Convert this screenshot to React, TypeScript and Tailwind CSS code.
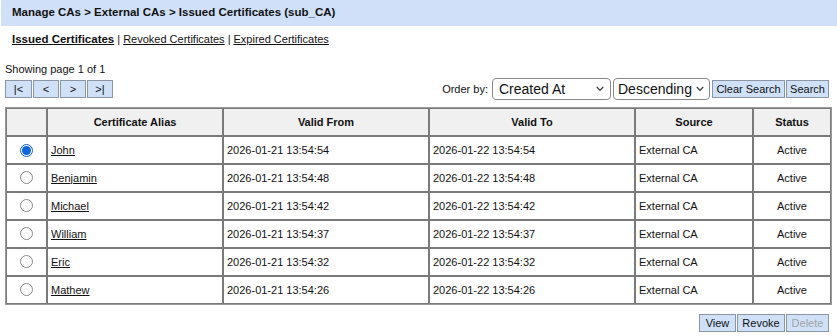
import React from "react";

const rows = [
  { name: "John", from: "2026-01-21 13:54:54", to: "2026-01-22 13:54:54" },
  { name: "Benjamin", from: "2026-01-21 13:54:48", to: "2026-01-22 13:54:48" },
  { name: "Michael", from: "2026-01-21 13:54:42", to: "2026-01-22 13:54:42" },
  { name: "William", from: "2026-01-21 13:54:37", to: "2026-01-22 13:54:37" },
  { name: "Eric", from: "2026-01-21 13:54:32", to: "2026-01-22 13:54:32" },
  { name: "Mathew", from: "2026-01-21 13:54:26", to: "2026-01-22 13:54:26" },
];

function Radio({ checked }: { checked: boolean }) {
  return checked ? (
    <span className="inline-flex w-[13px] h-[13px] rounded-full border border-[#0f5fd0] items-center justify-center bg-white">
      <span className="w-[9px] h-[9px] rounded-full bg-[#1065dc]" />
    </span>
  ) : (
    <span className="inline-block w-[13px] h-[13px] rounded-full border border-[#8a8a8a] bg-white" />
  );
}

function Chevron() {
  return (
    <svg width="8" height="6" viewBox="0 0 8 6" className="shrink-0">
      <path d="M0.8 1 L4 4.3 L7.2 1" fill="none" stroke="#333" strokeWidth="1.2" />
    </svg>
  );
}

const btnBase =
  "h-[18px] bg-[#cfe0f7] border border-[#8a96a6] text-[11px] leading-none flex items-center justify-center";
const btn = `${btnBase} text-[#111]`;

export default function App() {
  const font = { fontFamily: '"Liberation Sans", Arial, sans-serif' };
  return (
    <div className="w-[837px] h-[336px] bg-white text-[#111] text-[11px]" style={font}>
      <div className="h-[26px] ml-[1px] bg-[#cfe0f8] flex items-center pl-[11px] font-bold text-[11.5px]">
        Manage CAs &gt; External CAs &gt; Issued Certificates (sub_CA)
      </div>
      <div className="h-[28px] pl-[12px] pt-[5px] text-[11px] flex items-start">
        <span className="font-bold underline text-[11.5px]">Issued Certificates</span>
        <span className="mx-[3px]">|</span>
        <span className="underline">Revoked Certificates</span>
        <span className="mx-[3px]">|</span>
        <span className="underline">Expired Certificates</span>
      </div>
      <div className="px-[5px]">
        <div className="h-[24px] flex items-end pb-[1px]">Showing page 1 of 1</div>
        <div className="flex items-center justify-between h-[22px]">
          <div className="flex gap-[1px]">
            <div className={`${btn} w-[27px]`}>|&lt;</div>
            <div className={`${btn} w-[26px]`}>&lt;</div>
            <div className={`${btn} w-[26px]`}>&gt;</div>
            <div className={`${btn} w-[26px]`}>&gt;|</div>
          </div>
          <div className="flex items-center pr-[3px]">
            <span className="mr-[4px]">Order by:</span>
            <div className="w-[119px] h-[22px] border border-[#8a8a8a] rounded-[4px] bg-white flex items-center justify-between pl-[6px] pr-[6px] text-[14px]">
              <span>Created At</span>
              <Chevron />
            </div>
            <div className="ml-[2px] w-[97px] h-[22px] border border-[#8a8a8a] rounded-[4px] bg-white flex items-center justify-between pl-[4px] pr-[5px] text-[14px]">
              <span>Descending</span>
              <Chevron />
            </div>
            <div className={`${btn} ml-[2px] w-[73px] text-[10.5px]`}>Clear Search</div>
            <div className={`${btn} ml-[1px] w-[43px] text-[10.5px]`}>Search</div>
          </div>
        </div>
        <table
          className="mt-[7px] w-[827px] border border-[#9a9a9a] border-separate"
          style={{ borderSpacing: 0 }}
        >
          <thead>
            <tr className="bg-[#f0f0f0] h-[28px] font-bold">
              <th className="w-[41px] border border-[#7a7a7a]"></th>
              <th className="w-[176px] border border-[#7a7a7a]">Certificate Alias</th>
              <th className="w-[206px] border border-[#7a7a7a]">Valid From</th>
              <th className="w-[206px] border border-[#7a7a7a]">Valid To</th>
              <th className="w-[118px] border border-[#7a7a7a]">Source</th>
              <th className="border border-[#7a7a7a]">Status</th>
            </tr>
          </thead>
          <tbody>
            {rows.map((r, i) => (
              <tr key={r.name} className="h-[28px]">
                <td className="border border-[#7a7a7a] text-center align-middle">
                  <span className="inline-flex items-center justify-center pt-[3px]">
                    <Radio checked={i === 0} />
                  </span>
                </td>
                <td className="border border-[#7a7a7a] pl-[3px]">
                  <span className="underline">{r.name}</span>
                </td>
                <td className="border border-[#7a7a7a] pl-[3px]">{r.from}</td>
                <td className="border border-[#7a7a7a] pl-[3px]">{r.to}</td>
                <td className="border border-[#7a7a7a] pl-[3px]">External CA</td>
                <td className="border border-[#7a7a7a] text-center">Active</td>
              </tr>
            ))}
          </tbody>
        </table>
        <div className="flex justify-end pr-[3px] mt-[9px]">
          <div className={`${btn} w-[37px]`}>View</div>
          <div className={`${btn} ml-[1px] w-[48px]`}>Revoke</div>
          <div className={`${btnBase} ml-[1px] w-[43px] text-[#a0a4aa]`}>Delete</div>
        </div>
      </div>
    </div>
  );
}
